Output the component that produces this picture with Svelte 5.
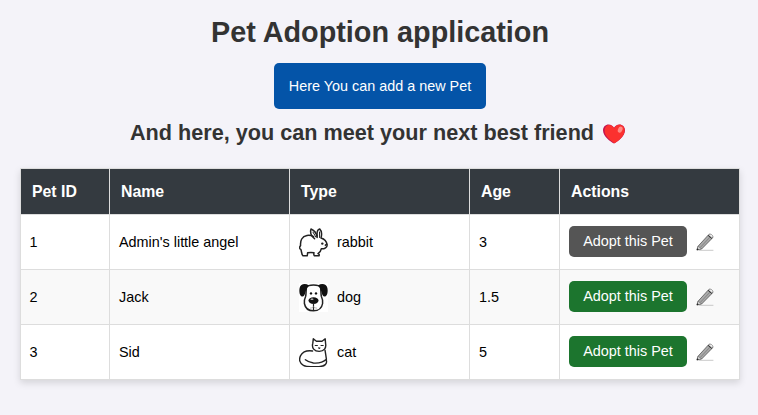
<script>
  const pets = [
    { id: 1, name: "Admin's little angel", type: 'rabbit', age: 3, adopted: true },
    { id: 2, name: 'Jack', type: 'dog', age: 1.5, adopted: false },
    { id: 3, name: 'Sid', type: 'cat', age: 5, adopted: false }
  ];
</script>

<main>
  <h1>Pet Adoption application</h1>
  <button class="add">Here You can add a new Pet</button>
  <h2>
    <span>And here, you can meet your next best friend</span>
    <svg class="heart" viewBox="0 0 22 20" aria-label="heart">
      <path d="M11 19.5C7.5 17.8 0 12.5 0 6.3C0 2.8 2.5 .5 5.6 .5C8 .5 10 1.8 11 3.8C12 1.8 14 .5 16.4 .5C19.5 .5 22 2.8 22 6.3C22 12.5 14.5 17.8 11 19.5Z" fill="#c21250" />
      <path d="M11.5 19.2C8.6 17.6 1.6 12.6 1.6 6.8C1.6 3.5 3.4 1 6.2 1C8.5 1 10.3 2.4 11.2 4.4C12.2 2 14 .7 16.4 .7C19.5 .7 21.7 3 21.7 6.3C21.7 12 15 17.3 11.5 19.2Z" fill="#fb312f" />
      <ellipse cx="17.2" cy="5.6" rx="2.2" ry="3.2" fill="#ff8a85" transform="rotate(25 17.2 5.6)" />
    </svg>
  </h2>
  <table>
    <colgroup>
      <col style="width: 89px" /><col style="width: 180px" /><col style="width: 180px" /><col style="width: 90px" /><col />
    </colgroup>
    <thead>
      <tr><th>Pet ID</th><th>Name</th><th>Type</th><th>Age</th><th>Actions</th></tr>
    </thead>
    <tbody>
      {#each pets as pet (pet.id)}
        <tr>
          <td>{pet.id}</td>
          <td>{pet.name}</td>
          <td>
            <div class="type">
              {#if pet.type === 'rabbit'}
                <svg class="animal" viewBox="0 0 29 29" fill="none" stroke="#222" stroke-width="1.5" stroke-linecap="round" stroke-linejoin="round">
                  <path d="M14.6 8.6C10.5 6.2 5 7 2.7 11C1.4 13.2 1.4 15.5 1.6 17.6C.2 18.8 .3 20.8 1.8 21.4C2.6 23 2.6 27 4 27.8H8.2C8.6 26.6 8.4 25.8 8.6 24.8C11 24.4 13 24.4 15 24.8C14.6 26 14.8 27 15.4 27.8H20C20.6 26.8 20 26 19 25.6C20.8 24.4 22 22.4 22.3 20.8C25.6 21 28.4 19.2 28.1 16.8C27.6 13.2 25.4 11 22 10C23 6.4 22.4 2.6 20.6 .9C18.6 1.4 17.8 4.5 18.2 8.2" />
                  <path d="M18.2 9.4C17.6 5.5 15 2.2 12 1C10.8 3.9 12.4 8 15.6 10.8" />
                  <path d="M20.5 4L20.6 9.5M14 4.2L17 9.2" stroke-width="1" />
                  <circle cx="23.3" cy="15.6" r="1.2" fill="#222" stroke="none" />
                  <path d="M27.8 16.2L26.4 17.2" />
                </svg>
              {:else if pet.type === 'dog'}
                <svg class="animal" viewBox="0 0 29 29">
                  <rect width="29" height="29" fill="#fff" />
                  <path d="M7.4 4.8C9 1.1 20 1.1 21.6 4.8C22.1 8 21.7 10.5 22.4 13.5C23.6 16 24 18 23.6 20.5C22.8 25.2 19 27.8 14.5 27.8C10 27.8 6.2 25.2 5.4 20.5C5 18 5.4 16 6.6 13.5C7.3 10.5 6.9 8 7.4 4.8Z" fill="#fff" stroke="#222" stroke-width="1.5" />
                  <path d="M10 2.4C6 -.2 1.4 1 .6 5C-.2 8.8 .8 13.4 3.4 13.5C7 13.3 5.8 6 10 2.4ZM19 2.4C23 -.2 27.6 1 28.4 5C29.2 8.8 28.2 13.4 25.6 13.5C22 13.3 23.2 6 19 2.4Z" fill="#111" />
                  <circle cx="12" cy="10.4" r="1.2" fill="#111" /><circle cx="17" cy="10.4" r="1.2" fill="#111" />
                  <ellipse cx="14.5" cy="17.6" rx="5" ry="3.4" fill="#111" />
                  <ellipse cx="13" cy="16.2" rx="1.5" ry=".6" fill="#ddd" />
                  <path d="M14.5 20V27" fill="none" stroke="#222" stroke-width="1.2" />
                  <path d="M11 25.2C12.5 25.2 13.8 24.6 14.5 23.8C15.2 24.6 16.5 25.2 18 25.2" fill="none" stroke="#999" stroke-width=".7" />
                </svg>
              {:else}
                <svg class="animal" viewBox="0 0 29 29" fill="none" stroke="#222" stroke-width="1.4" stroke-linecap="round" stroke-linejoin="round">
                  <path d="M13.8 5.2L14.3 .8L17.4 3.2H23L26.2 .8L26.6 5.6C27.5 10 25 13.2 20.2 13.4C15.4 13.4 12.4 10 13.8 5.2Z" />
                  <path d="M16.2 7.5H18.4M22 7.5H24.2M19.6 9.8L20.2 10.5L20.9 9.8" stroke-width="1.1" />
                  <path d="M13.6 13C8 12.2 3.4 14.4 1.6 17.6C-.3 21.4 .6 25.4 4.4 27.3C6.4 28.3 9 28.6 12 28.6H20C25.8 28.4 28.6 25.8 27.2 21.8M26 12.2C26.5 14.8 27 18.4 27.4 21.2C24.5 24 19.5 25.4 14.4 25C11 24.6 8.6 23.6 6.4 21.8" />
                </svg>
              {/if}
              <span>{pet.type}</span>
            </div>
          </td>
          <td>{pet.age}</td>
          <td>
            <div class="actions">
              <button class="adopt" class:adopted={pet.adopted}>Adopt this Pet</button>
              <svg class="pencil" viewBox="0 0 18 18" role="img" aria-label="Edit">
                <path d="M2 13.3L12.6 1.7C14.2 -.1 18.1 2.9 16.5 4.9L5.6 16L1 17Z" fill="#aaa" stroke="#555" stroke-width=".8" />
                <path d="M4.3 14.4L14.5 3.6" stroke="#777" stroke-width=".8" />
                <path d="M12 2.3L15.9 5.6" stroke="#333" stroke-width="1" />
                <path d="M13.8 1.6C15.2 .9 17.2 2.6 16.4 4L15.8 4.2L13.3 2.2Z" fill="#eee" />
                <path d="M2 13.3L5.4 15.7L1 17Z" fill="#ddd" stroke="#555" stroke-width=".5" />
                <path d="M1.4 15.2L2.8 16.3L.6 17.2Z" fill="#111" />
                <path d="M3 17.3H17.4" stroke="#bbb" stroke-width=".8" />
              </svg>
            </div>
          </td>
        </tr>
      {/each}
    </tbody>
  </table>
</main>

<style>
  :global(body) {
    margin: 0;
    background: #f4f3f9;
  }
  main {
    box-sizing: border-box;
    height: 415px;
    padding: 14px 18px 0 20px;
    display: flex;
    flex-direction: column;
    align-items: center;
    font: 14.4px "Liberation Sans", Arial, sans-serif;
    color: #000;
  }
  h1, h2 {
    margin: 0;
    color: #333;
    white-space: nowrap;
  }
  h1 {
    font-size: 28.8px;
    line-height: 36px;
  }
  button {
    border: 0;
    padding: 0 0 1px;
    color: #fff;
    font: inherit;
    white-space: nowrap;
  }
  .add {
    width: 212px;
    height: 46px;
    margin-top: 13px;
    border-radius: 5px;
    background: #0454a8;
  }
  h2 {
    display: flex;
    align-items: center;
    gap: 9px;
    margin-top: 11px;
    padding-right: 5px;
    font-size: 21.65px;
    line-height: 26px;
  }
  .heart {
    width: 22px;
    height: 20px;
    margin-top: 2px;
  }
  table {
    width: 720px;
    margin-top: 22px;
    table-layout: fixed;
    border-collapse: collapse;
    background: #fff;
    box-shadow: 0 3px 7px rgba(0, 0, 0, 0.13);
  }
  th, td {
    box-sizing: border-box;
    border: 1px solid #ddd;
    text-align: left;
    white-space: nowrap;
  }
  th {
    height: 46px;
    padding: 0 11px;
    background: #343a40;
    color: #fff;
    font-size: 15.84px;
  }
  td {
    height: 55px;
    padding: 0 9px;
  }
  td:first-child {
    padding-left: 8.5px;
  }
  tbody tr:nth-child(even) {
    background: #f9f9f9;
  }
  .type, .actions {
    display: flex;
    align-items: center;
    gap: 9px;
  }
  .actions {
    padding-bottom: 2px;
  }
  .animal {
    width: 29px;
    height: 29px;
  }
  .adopt {
    width: 118px;
    height: 31px;
    border-radius: 5px;
    background: #1c752e;
  }
  .adopt.adopted {
    background: #555;
  }
  .pencil {
    width: 18px;
    height: 18px;
    margin-top: 2px;
  }
</style>
